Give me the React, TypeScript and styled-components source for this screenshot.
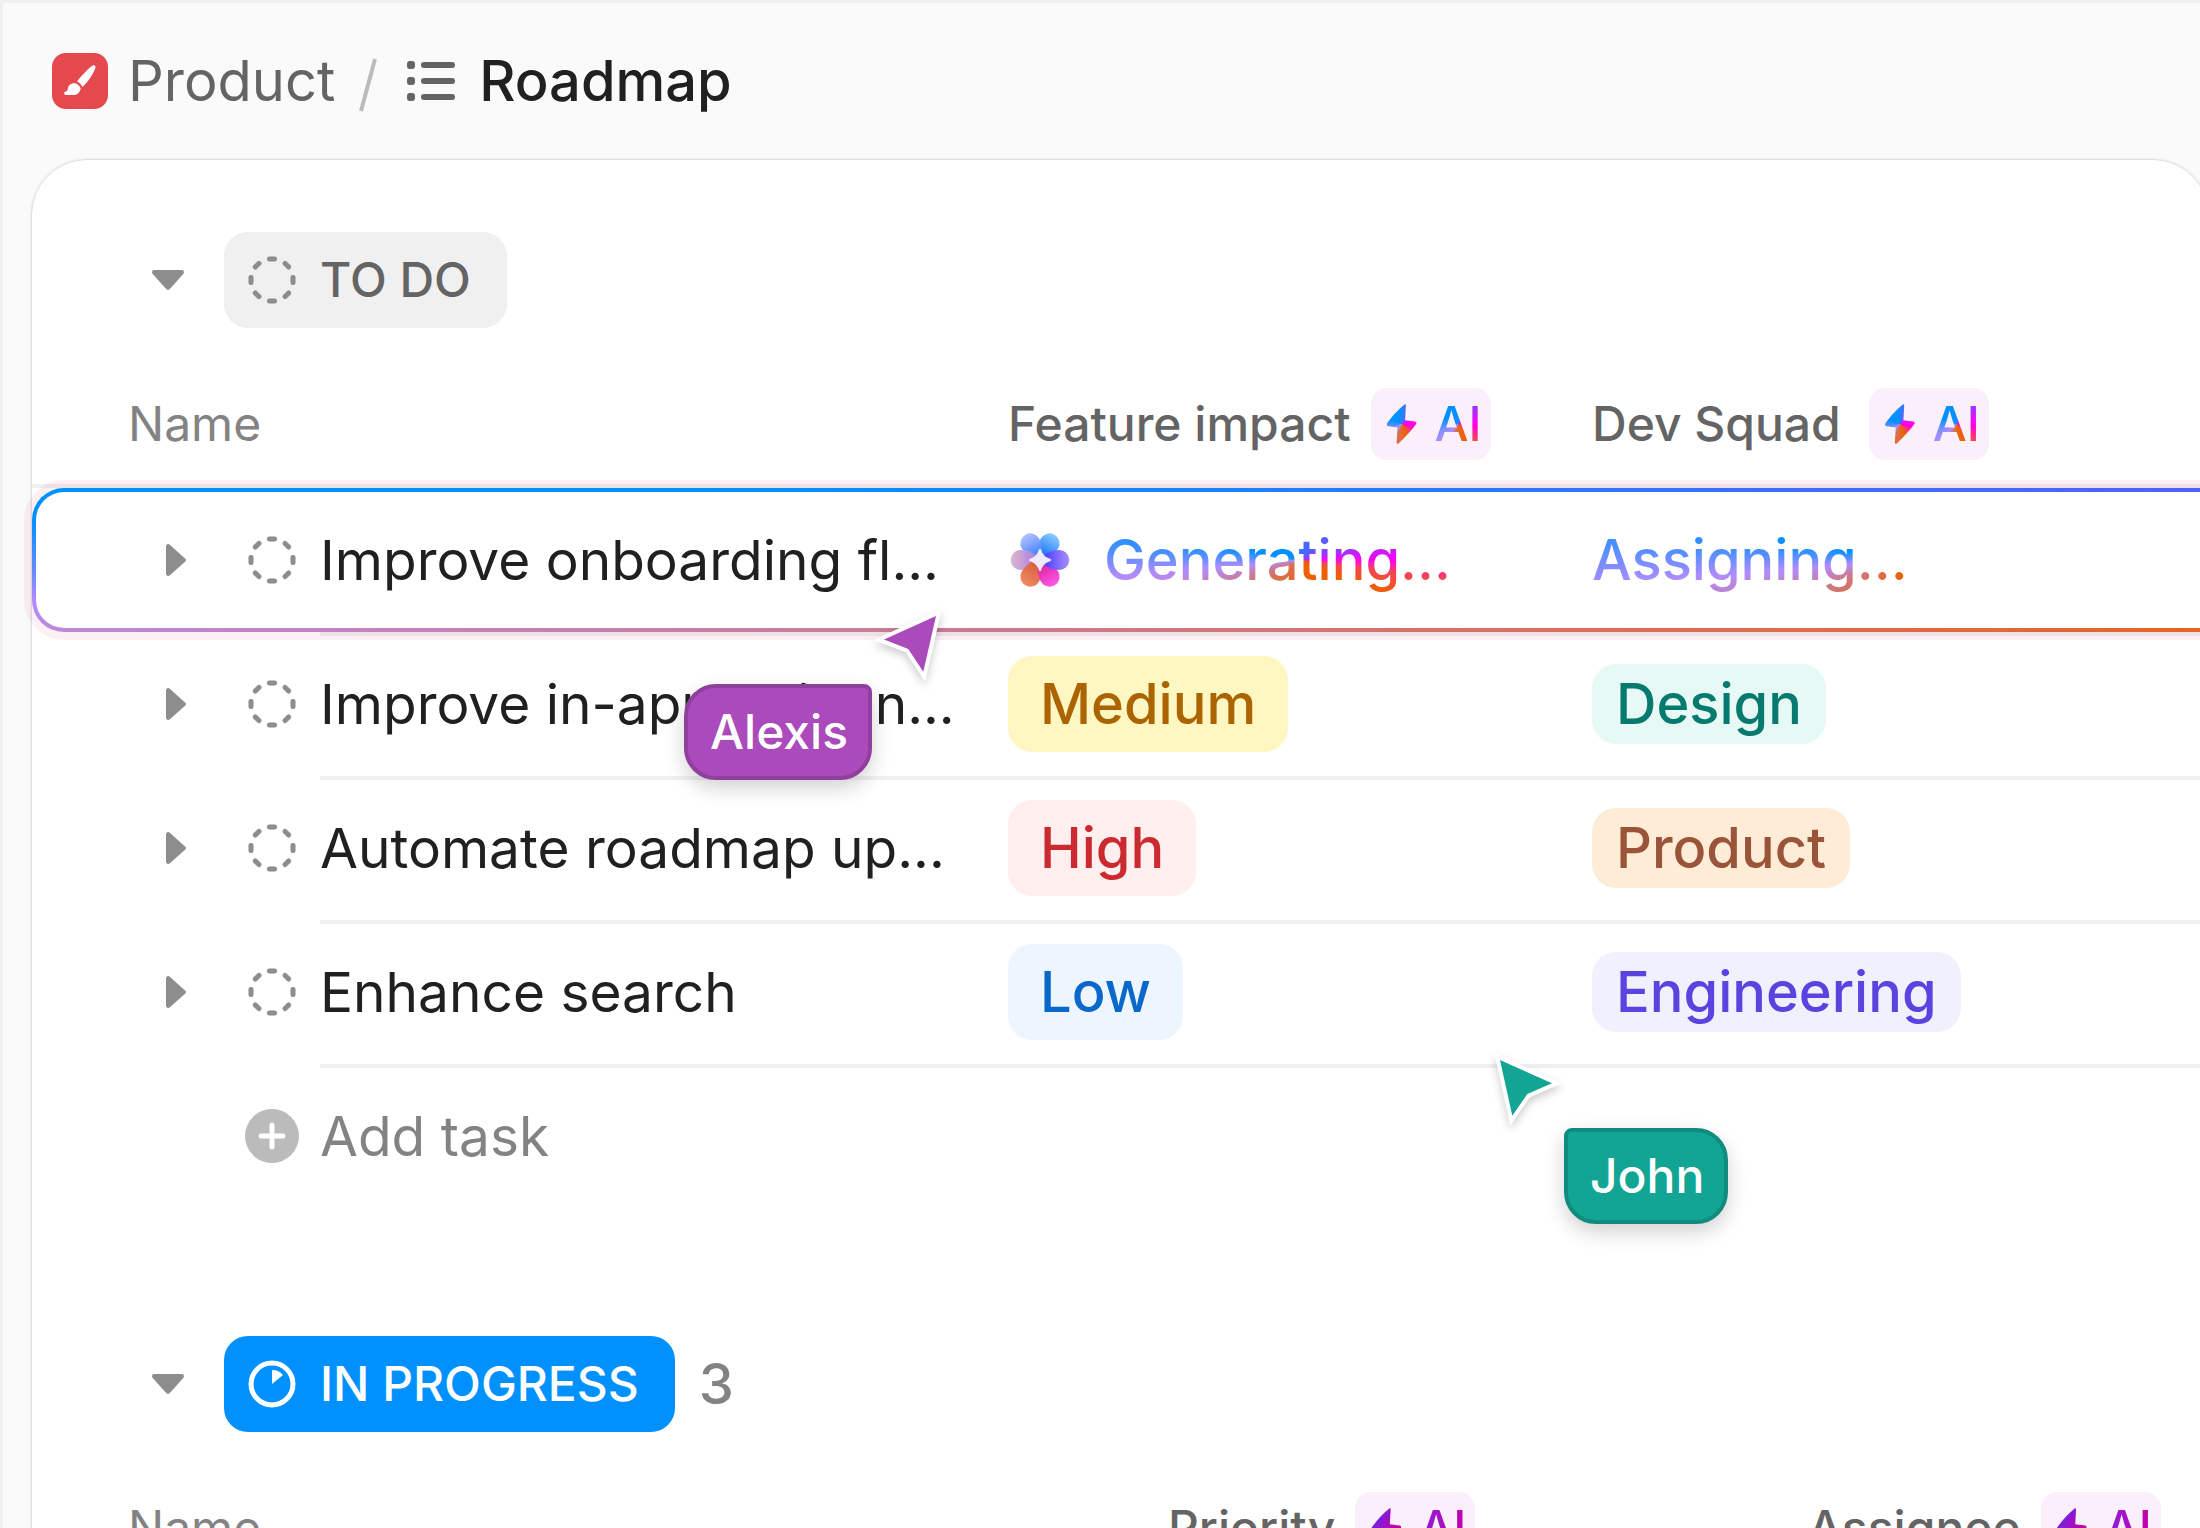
import React from "react";
import styled, { createGlobalStyle, css } from "styled-components";

const GlobalStyle = createGlobalStyle`
  *, *::before, *::after { box-sizing: border-box; }
  body {
    margin: 0;
    background: #fafafa;
    color: #202020;
    font-family: Inter, "Liberation Sans", sans-serif;
    font-size: 56px;
    line-height: 72px;
    -webkit-font-smoothing: antialiased;
  }
  button {
    margin: 0;
    padding: 0;
    border: 0;
    background: none;
    color: inherit;
    font: inherit;
    cursor: pointer;
  }
  svg { display: block; flex: none; overflow: visible; }
`;

const aiConic =
  "conic-gradient(from 0deg, #2a7cff 0deg, #4668ff 12deg, #5560ff 50deg, #a033ff 79deg, #ff00f5 90deg, #f5425b 97deg, #ed5f00 111deg, #ed5f00 150deg, #d9704f 235deg, #cb7a90 252deg, #b18cff 265deg, #4a8fff 273deg, #0091ff 281deg, #0091ff 340deg, #2a7cff 360deg)";

const aiConicCompact =
  "conic-gradient(from 0deg, #1f84ff 0deg, #5560ff 20deg, #a033ff 45deg, #ff00f5 85deg, #ff00d8 100deg, #f5425b 134deg, #ed5f00 152deg, #d9704f 200deg, #b18cff 226deg, #8a8fff 245deg, #0091ff 290deg, #0091ff 345deg, #1f84ff 360deg)";

const Page = styled.div`
  height: 100vh;
  overflow: hidden;
  border-top: 3px solid #f0f0f0;
  border-left: 3px solid #f0f0f0;
`;

const Breadcrumb = styled.nav`
  display: flex;
  align-items: center;
  height: 156px;
  padding-left: 49px;
`;

const SpaceLink = styled.a`
  display: flex;
  align-items: center;
  gap: 20px;
  color: #646464;
  text-decoration: none;
`;

const SpaceIcon = styled.span`
  display: grid;
  place-items: center;
  width: 56px;
  height: 56px;
  border-radius: 14px;
  background: #e5484d;
`;

const Slash = styled.span`
  display: flex;
  margin: 0 30px 0 24px;
`;

const CurrentPage = styled.span`
  display: flex;
  align-items: center;
  gap: 24px;
  font-weight: 500;
`;

const Card = styled.main`
  min-height: 100vh;
  margin: 0 -9px 0 28px;
  padding-top: 72px;
  border: 1px solid #e0e0e0;
  border-radius: 56px 56px 0 0;
  background: #fff;
  box-shadow: 0 0 3px rgba(0, 0, 0, 0.08);
`;

const Group = styled.section`
  position: relative;
  margin: 0 -40px 128px 0;
`;

const GroupTitle = styled.header`
  display: flex;
  align-items: center;
  height: 96px;
  margin-bottom: 32px;
  padding-left: 120px;
`;

const Toggle = styled.button`
  display: grid;
  place-items: center;
  width: 32px;
  height: 32px;
`;

const StatusPill = styled.h2<{ $solid?: boolean }>`
  display: flex;
  align-items: center;
  gap: 24px;
  height: 96px;
  margin: 0 24px 0 40px;
  padding: 0 36px 0 24px;
  border-radius: 24px;
  background: ${(p) => (p.$solid ? "#0091ff" : "#f0f0f0")};
  color: ${(p) => (p.$solid ? "#fff" : "#646464")};
  font-size: 48px;
  font-weight: 500;
`;

const Count = styled.span`
  color: #838383;
  font-weight: 500;
`;

const Table = styled.table`
  display: block;
`;

const Head = styled.thead`
  display: block;
`;

const Body = styled.tbody`
  display: block;
`;

const columns = {
  todo: "minmax(0, 1fr) 584px 656px",
  progress: "minmax(0, 1fr) 640px 440px",
};

const HeadRow = styled.tr<{ $columns: string }>`
  display: grid;
  grid-template-columns: ${(p) => p.$columns};
  height: 128px;
  box-shadow: inset 0 -4px 0 #f0f0f0;
`;

const HeadCell = styled.th<{ $first?: boolean; $wide?: boolean }>`
  display: flex;
  align-items: center;
  gap: ${(p) => (p.$wide ? "28px" : "20px")};
  padding: 0 0 0 ${(p) => (p.$first ? "96px" : "0")};
  color: ${(p) => (p.$first ? "#838383" : "#646464")};
  font-size: 48px;
  font-weight: ${(p) => (p.$first ? 400 : 500)};
  text-align: left;
`;

const AiTag = styled.span`
  display: flex;
  align-items: center;
  gap: 18px;
  width: 120px;
  height: 72px;
  padding-left: 16px;
  border-radius: 16px;
  background: #fbeffb;
`;

const AiText = styled.span<{ $muted?: boolean }>`
  background: ${(p) => (p.$muted ? "linear-gradient(90deg, #8a20dc, #c600a8)" : aiConicCompact)};
  background-clip: text;
  -webkit-background-clip: text;
  color: transparent;
`;

const Bolt = styled.span<{ $muted?: boolean }>`
  width: 30px;
  height: 40px;
  background: ${(p) => (p.$muted ? "linear-gradient(120deg, #6a26e8 15%, #c600a8 70%)" : aiConicCompact)};
  clip-path: path("M18 0.6 C12 5.5 5 13 0.5 19.5 Q-0.5 21.6 1.8 22.2 L11 23.6 L10 38.600 Q10.200 40.500 12 39.400 C18 34 25 26.500 29.600 20 Q30.600 18 28.400 17.400 L18.600 16.200 L19.400 1.200 Q19.200 -0.400 18 0.600 Z");
`;

const Cell = styled.td`
  display: flex;
  align-items: center;
  min-width: 0;
  padding: 0;
`;

const NameCell = styled(Cell)`
  display: grid;
  grid-template-columns: 288px minmax(0, 1fr);
`;

const Controls = styled.span`
  display: flex;
  align-items: center;
  gap: 56px;
  padding-left: 128px;
`;

const Name = styled.span`
  display: flex;
  align-items: center;
  height: 144px;
  font-size: 55px;
  white-space: nowrap;
`;

const Row = styled.tr<{ $active?: boolean }>`
  position: relative;
  display: grid;
  grid-template-columns: ${columns.todo};
  height: 144px;

  ${(p) =>
    p.$active
      ? css`
          z-index: 1;
          &::before {
            content: "";
            position: absolute;
            inset: 0;
            z-index: -1;
            border: 4px solid transparent;
            border-radius: 32px;
            background:
              linear-gradient(#fff, #fff) padding-box,
              linear-gradient(#0091ff 20%, #5c8cff 55%, #b18cff 78%, #bd88d8) 0 0 / 36px 100% no-repeat border-box,
              linear-gradient(90deg, #0091ff 30%, #2f74ff 70%, #5060ff 98%) 0 0 / 100% 50% no-repeat border-box,
              linear-gradient(90deg, #bd88d8, #cb7a90 43%, #d9705a 71%, #e46428 98%) 0 100% / 100% 50% no-repeat border-box;
            box-shadow: 0 0 0 8px rgba(233, 61, 130, 0.08);
          }
        `
      : css`
          ${Name}, ${Cell}:not(${NameCell}) {
            box-shadow: inset 0 4px 0 #f0f0f0;
          }
        `}
`;

const Generating = styled.span`
  flex: 1;
  margin: 0 96px 0 32px;
  background: ${aiConic};
  background-clip: text;
  -webkit-background-clip: text;
  color: transparent;
  font-weight: 500;
`;

const Assigning = styled.span`
  width: 608px;
  background: ${aiConic};
  background-clip: text;
  -webkit-background-clip: text;
  color: transparent;
  font-weight: 500;
`;

type Tone = "yellow" | "red" | "blue" | "teal" | "orange" | "violet";

const tones: Record<Tone, [string, string]> = {
  yellow: ["#fff7c2", "#ab6400"],
  red: ["#ffefef", "#ca2a30"],
  blue: ["#edf6ff", "#0b68cb"],
  teal: ["#e7f9f5", "#067a6f"],
  orange: ["#ffecd6", "#99543a"],
  violet: ["#eff1ff", "#5b43df"],
};

const Chip = styled.span<{ $tone: Tone; $size: "large" | "small" }>`
  display: flex;
  align-items: center;
  height: ${(p) => (p.$size === "large" ? "96px" : "80px")};
  padding: 0 ${(p) => (p.$size === "large" ? "32px" : "24px")};
  border-radius: 24px;
  background: ${(p) => tones[p.$tone][0]};
  color: ${(p) => tones[p.$tone][1]};
  font-weight: 500;
`;

const AddRow = styled.div`
  display: flex;
  height: 144px;
  margin-left: 288px;
  box-shadow: inset 0 4px 0 #f0f0f0;
`;

const AddButton = styled.button`
  display: flex;
  align-items: center;
  gap: 20px;
  margin-left: -76px;
  color: #838383;
  font-size: 55px;
`;

const Presence = styled.div<{ $x: number; $y: number }>`
  position: absolute;
  left: ${(p) => p.$x}px;
  top: ${(p) => p.$y}px;
  z-index: 2;
`;

const Pointer = styled.svg`
  filter: drop-shadow(0 4px 4px rgba(0, 0, 0, 0.2));
`;

const PersonTag = styled(Presence)<{ $side: "left" | "right"; $fill: string; $edge: string }>`
  display: flex;
  align-items: center;
  height: 96px;
  padding: 0 20px 0 22px;
  border: 4px solid ${(p) => p.$edge};
  border-radius: ${(p) => (p.$side === "left" ? "8px 32px 32px 32px" : "32px 8px 32px 32px")};
  background: ${(p) => p.$fill};
  box-shadow: 0 8px 20px rgba(0, 0, 0, 0.18);
  color: #fff;
  font-size: 48px;
  font-weight: 500;
`;

function BrushIcon() {
  return (
    <svg width="32" height="32" viewBox="0 0 32 32" fill="#fff" aria-hidden="true">
      <path d="M28.8 0.6c1.8-.9 3.2.5 2.5 2.4-1.700 4.900-5.200 11.300-11.400 17.600l-1.600 1.400c-.8-2.300-3-4.600-5.400-5.400l1.300-1.700C19.700 8.600 24.700 3 28.800.6z" />
      <path d="M11.300 18.300c2.400.6 4.700 2.900 5.400 5.300-.7 3.600-3 6.400-6.600 6.400H2c-2.400 0-2.600-3-.4-3.400 1.600-.4 2-1.200 2.200-3.200.4-3 3.400-5.600 7.500-5.100z" />
    </svg>
  );
}

function ListIcon() {
  return (
    <svg width="48" height="40" viewBox="0 0 48 40" fill="#646464" aria-hidden="true">
      {[0, 16, 32].map((y) => (
        <g key={y}>
          <rect x="0" y={y} width="8" height="8" rx="3" />
          <rect x="14" y={y + 1} width="34" height="6" rx="3" />
        </g>
      ))}
    </svg>
  );
}

function SlashIcon() {
  return (
    <svg width="18" height="60" viewBox="0 0 18 60" aria-hidden="true">
      <path d="M16 8L2 60" stroke="#bbb" strokeWidth="4" />
    </svg>
  );
}

function CaretDown() {
  return (
    <svg width="32" height="20" viewBox="0 0 32 20" fill="#8d8d8d" aria-hidden="true">
      <path d="M2.500 0h27c2.300 0 3.200 2.200 1.800 3.900L18 18.800c-1.300 1.500-2.700 1.500-4 0L.7 3.900C-.7 2.200.2 0 2.500 0z" />
    </svg>
  );
}

function CaretRight() {
  return (
    <svg width="20" height="32" viewBox="0 0 20 32" fill="#8d8d8d" aria-hidden="true">
      <path d="M0 2.500C0 .2 2.200-.7 3.900.7L19 14.400c1.400 1.200 1.400 2.200 0 3.400L3.900 31.300C2.200 32.700 0 31.800 0 29.500z" />
    </svg>
  );
}

function DashedCircle() {
  return (
    <svg width="48" height="48" viewBox="-24 -24 48 48" fill="#8d8d8d" aria-hidden="true">
      {[0, 45, 90, 135, 180, 225, 270, 315].map((angle) => (
        <rect key={angle} x="-5" y="-23.500" width="10" height="5" rx="2.200" transform={`rotate(${angle})`} />
      ))}
    </svg>
  );
}

function ProgressIcon() {
  return (
    <svg width="48" height="48" viewBox="-24 -24 48 48" aria-hidden="true">
      <circle r="21" fill="none" stroke="#fff" strokeWidth="5" />
      <path d="M0 0V-14A14 14 0 0 1 11 -9z" fill="#fff" />
    </svg>
  );
}

function PlusIcon() {
  return (
    <svg width="56" height="56" viewBox="-28 -28 56 56" aria-hidden="true">
      <circle r="27" fill="#bbb" />
      <path d="M-11 0H11M0 -11V11" stroke="#fff" strokeWidth="5" strokeLinecap="round" />
    </svg>
  );
}

const petals: [number, string, string][] = [
  [30, "#8fccff", "#1f7dff"],
  [330, "#b4c2ff", "#4a86ff"],
  [270, "#dcb8cc", "#b284e0"],
  [210, "#ee8a62", "#dc6440"],
  [150, "#ff5ae4", "#e02aa8"],
  [90, "#a98cff", "#5a48ff"],
];

function BrainIcon() {
  return (
    <svg width="64" height="56" viewBox="-32 -28 64 56" aria-hidden="true">
      <defs>
        {petals.map(([angle, outer, inner]) => (
          <linearGradient key={angle} id={`petal${angle}`} x1="0" y1="0" x2="0" y2="1">
            <stop offset="0" stopColor={outer} />
            <stop offset="0.700" stopColor={inner} />
          </linearGradient>
        ))}
      </defs>
      {petals.map(([angle]) => (
        <path
          key={angle}
          d="M0 2C-6 -4 -10 -12 -10 -19.300A10 10 0 0 1 10 -19.300C10 -12 6 -4 0 2z"
          fill={`url(#petal${angle})`}
          transform={`rotate(${angle})`}
        />
      ))}
      <path d="M-1 -10.500Q0 -12 1 -10.500C2.500 -5.500 5.500 -2.500 10.500 -1Q12 0 10.500 1C5.500 2.500 2.500 5.500 1 10.500Q0 12 -1 10.500C-2.500 5.500 -5.500 2.500 -10.500 1Q-12 0 -10.500 -1C-5.500 -2.500 -2.500 -5.500 -1 -10.500z" fill="#f1eafb" />
    </svg>
  );
}

function AiBadge({ muted }: { muted?: boolean }) {
  return (
    <AiTag>
      <Bolt $muted={muted} aria-hidden="true" />
      <AiText $muted={muted}>AI</AiText>
    </AiTag>
  );
}

type Task = { name: string; impact?: [string, Tone]; squad?: [string, Tone] };

const tasks: Task[] = [
  { name: "Improve onboarding fl..." },
  { name: "Improve in-app guidan...", impact: ["Medium", "yellow"], squad: ["Design", "teal"] },
  { name: "Automate roadmap up...", impact: ["High", "red"], squad: ["Product", "orange"] },
  { name: "Enhance search", impact: ["Low", "blue"], squad: ["Engineering", "violet"] },
];

function TaskRow({ task }: { task: Task }) {
  return (
    <Row $active={!task.impact}>
      <NameCell>
        <Controls>
          <Toggle aria-label="Expand task">
            <CaretRight />
          </Toggle>
          <DashedCircle />
        </Controls>
        <Name>{task.name}</Name>
      </NameCell>
      <Cell>
        {task.impact ? (
          <Chip $size="large" $tone={task.impact[1]}>{task.impact[0]}</Chip>
        ) : (
          <>
            <BrainIcon />
            <Generating>Generating...</Generating>
          </>
        )}
      </Cell>
      <Cell>
        {task.squad ? (
          <Chip $size="small" $tone={task.squad[1]}>{task.squad[0]}</Chip>
        ) : (
          <Assigning>Assigning...</Assigning>
        )}
      </Cell>
    </Row>
  );
}

export default function App() {
  return (
    <>
      <GlobalStyle />
      <Page>
        <Breadcrumb aria-label="Breadcrumb">
          <SpaceLink href="#product">
            <SpaceIcon>
              <BrushIcon />
            </SpaceIcon>
            Product
          </SpaceLink>
          <Slash>
            <SlashIcon />
          </Slash>
          <CurrentPage aria-current="page">
            <ListIcon />
            Roadmap
          </CurrentPage>
        </Breadcrumb>

        <Card>
          <Group>
            <GroupTitle>
              <Toggle aria-label="Collapse group">
                <CaretDown />
              </Toggle>
              <StatusPill>
                <DashedCircle />
                TO DO
              </StatusPill>
            </GroupTitle>
            <Table>
              <Head>
                <HeadRow $columns={columns.todo}>
                  <HeadCell $first>Name</HeadCell>
                  <HeadCell>
                    Feature impact <AiBadge />
                  </HeadCell>
                  <HeadCell $wide>
                    Dev Squad <AiBadge />
                  </HeadCell>
                </HeadRow>
              </Head>
              <Body>
                {tasks.map((task) => (
                  <TaskRow key={task.name} task={task} />
                ))}
              </Body>
            </Table>
            <AddRow>
              <AddButton>
                <PlusIcon />
                Add task
              </AddButton>
            </AddRow>

            <Presence $x={852} $y={384}>
              <Pointer width="52" height="56" viewBox="0 0 52 56" aria-hidden="true">
                <path d="M52 0L0 23.600L24.300 33L39.300 55.700z" fill="#ab4aba" stroke="#fff" strokeWidth="8" paintOrder="stroke" />
              </Pointer>
            </Presence>
            <PersonTag $x={652} $y={452} $side="right" $fill="#ab4aba" $edge="#903f9e">
              Alexis
            </PersonTag>
            <Presence $x={1468} $y={828}>
              <Pointer width="52" height="56" viewBox="0 0 52 56" aria-hidden="true">
                <path d="M0 0L52 23.300L27.300 34L12.300 55.700z" fill="#12a594" stroke="#fff" strokeWidth="8" paintOrder="stroke" />
              </Pointer>
            </Presence>
            <PersonTag $x={1532} $y={896} $side="left" $fill="#12a594" $edge="#0f8c7e">
              John
            </PersonTag>
          </Group>

          <Group>
            <GroupTitle>
              <Toggle aria-label="Collapse group">
                <CaretDown />
              </Toggle>
              <StatusPill $solid>
                <ProgressIcon />
                IN PROGRESS
              </StatusPill>
              <Count>3</Count>
            </GroupTitle>
            <Table>
              <Head>
                <HeadRow $columns={columns.progress}>
                  <HeadCell $first>Name</HeadCell>
                  <HeadCell>
                    Priority <AiBadge muted />
                  </HeadCell>
                  <HeadCell>
                    Assignee <AiBadge muted />
                  </HeadCell>
                </HeadRow>
              </Head>
            </Table>
          </Group>
        </Card>
      </Page>
    </>
  );
}
